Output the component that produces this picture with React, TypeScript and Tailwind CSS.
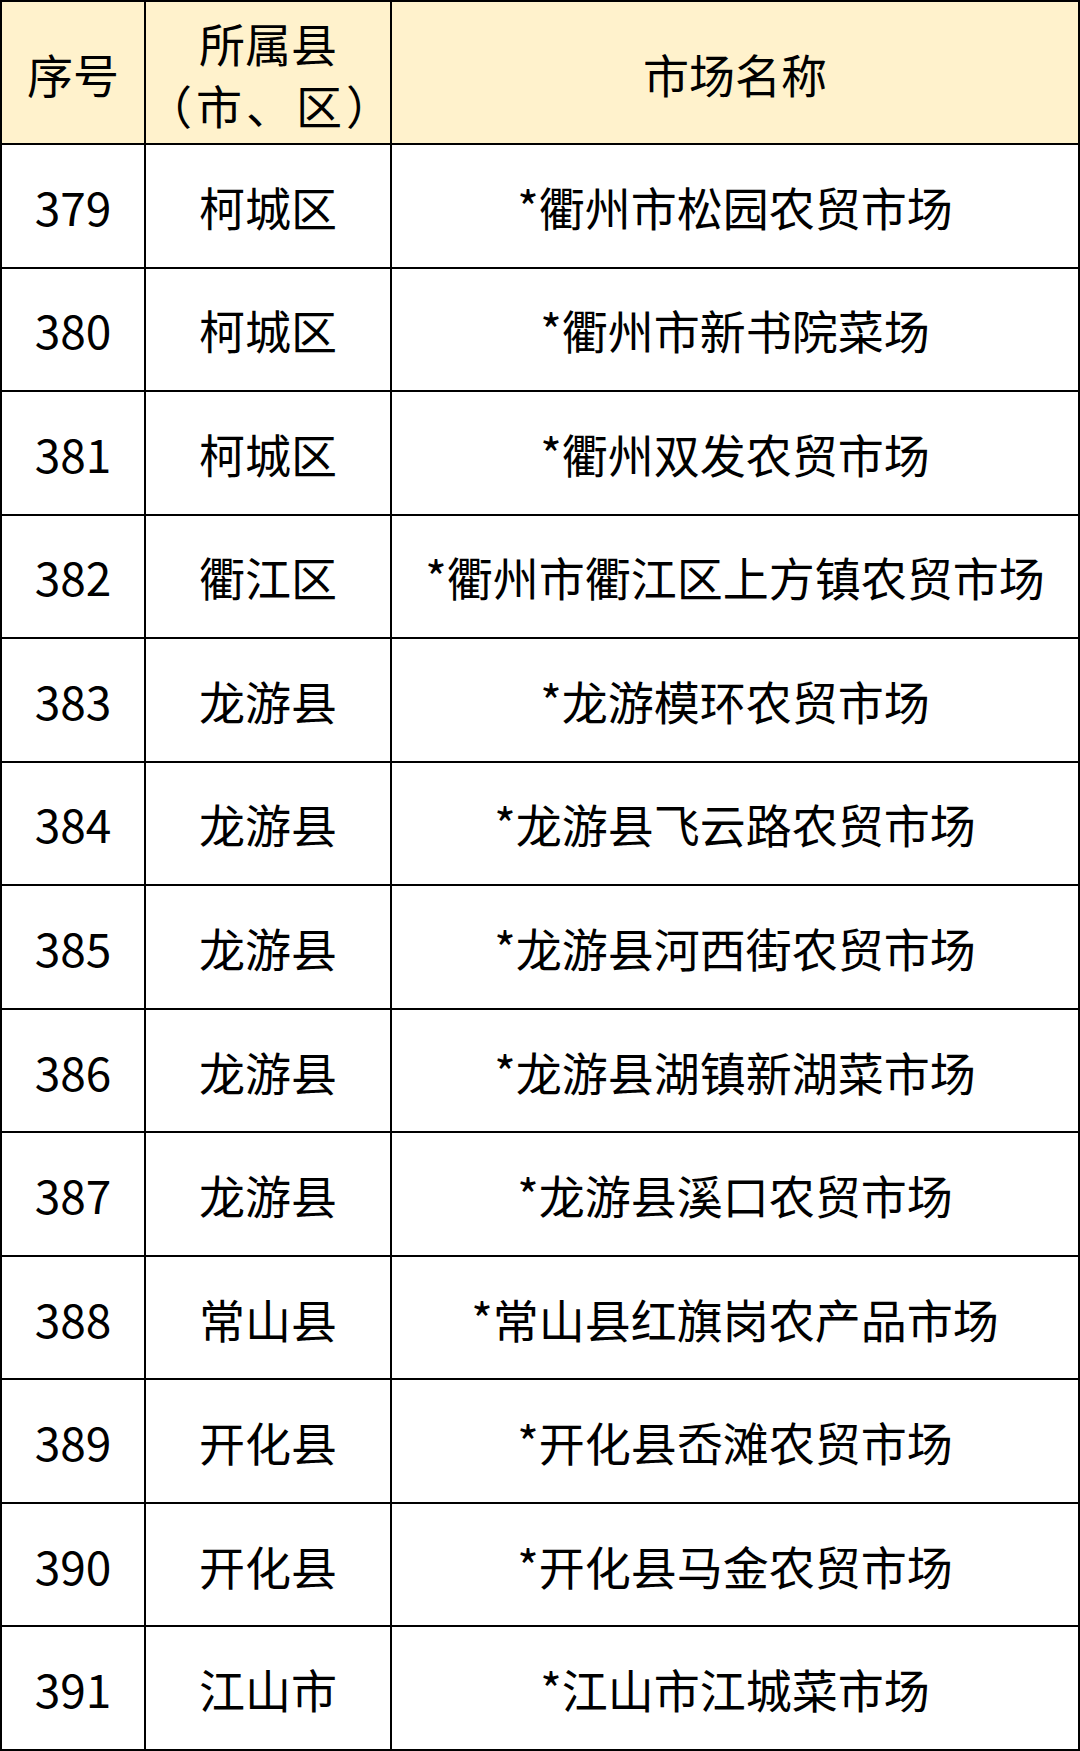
const rows: [string, string, string][] = [
  ["379", "柯城区", "*衢州市松园农贸市场"],
  ["380", "柯城区", "*衢州市新书院菜场"],
  ["381", "柯城区", "*衢州双发农贸市场"],
  ["382", "衢江区", "*衢州市衢江区上方镇农贸市场"],
  ["383", "龙游县", "*龙游模环农贸市场"],
  ["384", "龙游县", "*龙游县飞云路农贸市场"],
  ["385", "龙游县", "*龙游县河西街农贸市场"],
  ["386", "龙游县", "*龙游县湖镇新湖菜市场"],
  ["387", "龙游县", "*龙游县溪口农贸市场"],
  ["388", "常山县", "*常山县红旗岗农产品市场"],
  ["389", "开化县", "*开化县岙滩农贸市场"],
  ["390", "开化县", "*开化县马金农贸市场"],
  ["391", "江山市", "*江山市江城菜市场"],
];

export default function App() {
  return (
    <div
      className="w-[1080px] h-[1751px] bg-black p-[2px] grid grid-cols-[142px_244px_1fr] grid-rows-[141px_repeat(13,1fr)] gap-[2px] text-[46px] leading-none text-black"
      style={{ fontFamily: '"Noto Sans CJK SC", "Noto Sans", sans-serif' }}>
      {/* Header */}
      <div className="bg-[#fff2cc] flex items-center justify-center">序号</div>
      <div className="bg-[#fff2cc] flex flex-col items-center justify-center leading-[62px]">
        <span>所属县</span>
        <span className="tracking-[4px] pr-[16px]">（市、区）</span>
      </div>
      <div className="bg-[#fff2cc] flex items-center justify-center">市场名称</div>

      {/* Body */}
      {rows.map(([no, county, name]) => (
        <div key={no} className="contents">
          <div className="bg-white flex items-center justify-center">{no}</div>
          <div className="bg-white flex items-center justify-center">{county}</div>
          <div className="bg-white flex items-center justify-center">{name}</div>
        </div>
      ))}
    </div>
  );
}
